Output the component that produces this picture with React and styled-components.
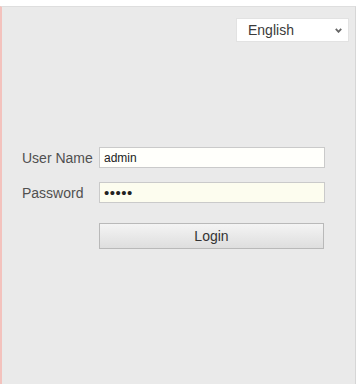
import React, { useState } from 'react';
import styled, { createGlobalStyle } from 'styled-components';

const GlobalStyle = createGlobalStyle`
  html, body {
    margin: 0;
    padding: 0;
    background: #ffffff;
    font-family: "Liberation Sans", Arial, sans-serif;
  }
`;

const Page = styled.div`
  width: 359px;
  height: 384px;
  padding-top: 6px;
  box-sizing: border-box;
  background: #ffffff;
`;

const Panel = styled.div`
  width: 356px;
  height: 378px;
  box-sizing: border-box;
  background: #eaeaea;
  border-top: 1px solid #dedede;
  border-left: 2px solid #f3c2bd;
  border-right: 1px solid #d6d6d6;
  display: flex;
  flex-direction: column;
`;

const TopBar = styled.div`
  display: flex;
  justify-content: flex-end;
  padding: 11px 6px 0 0;
`;

const LangSelect = styled.div`
  width: 113px;
  height: 24px;
  box-sizing: border-box;
  background: #ffffff;
  border: 1px solid #e2e2e2;
  display: flex;
  align-items: center;
  justify-content: space-between;
  padding: 0 6px 0 11px;
  font-size: 14px;
  color: #3a3a3a;
  cursor: pointer;
`;

const Form = styled.form`
  display: flex;
  flex-direction: column;
  gap: 14px;
  padding: 105px 0 0 20px;
`;

const Row = styled.div`
  display: flex;
  align-items: center;
`;

const Label = styled.label`
  width: 77px;
  font-size: 14px;
  color: #505050;
`;

const Field = styled.input`
  width: 226px;
  height: 21px;
  box-sizing: border-box;
  border: 1px solid #cacaca;
  background: ${(p) => p.$tint};
  padding: 0 4px;
  font-family: "Liberation Sans", Arial, sans-serif;
  font-size: ${(p) => (p.type === 'password' ? '15px' : '12px')};
  color: #222;
  outline: none;
  letter-spacing: ${(p) => (p.type === 'password' ? '0.5px' : '0')};
`;

const Button = styled.button`
  margin: 6px 0 0 77px;
  width: 225px;
  height: 26px;
  border: 1px solid #b9b9b9;
  border-radius: 0;
  background: linear-gradient(#f4f4f4, #dedede);
  font-family: "Liberation Sans", Arial, sans-serif;
  font-size: 14px;
  color: #333;
  cursor: pointer;
`;

const Chevron = () => (
  <svg width="7" height="5" viewBox="0 0 7 5">
    <path d="M0.8 0.8 L3.5 3.8 L6.2 0.8" fill="none" stroke="#666" strokeWidth="1.8" />
  </svg>
);

const App = () => {
  const [user, setUser] = useState('admin');
  const [pass, setPass] = useState('admin');

  return (
    <Page>
      <GlobalStyle />
      <Panel>
        <TopBar>
          <LangSelect>
            <span>English</span>
            <Chevron />
          </LangSelect>
        </TopBar>
        <Form onSubmit={(e) => e.preventDefault()}>
          <Row>
            <Label>User Name</Label>
            <Field $tint="#fffffb" value={user} onChange={(e) => setUser(e.target.value)} />
          </Row>
          <Row>
            <Label>Password</Label>
            <Field $tint="#fdfdef" type="password" value={pass} onChange={(e) => setPass(e.target.value)} />
          </Row>
          <Button type="submit">Login</Button>
        </Form>
      </Panel>
    </Page>
  );
};

export default App;
